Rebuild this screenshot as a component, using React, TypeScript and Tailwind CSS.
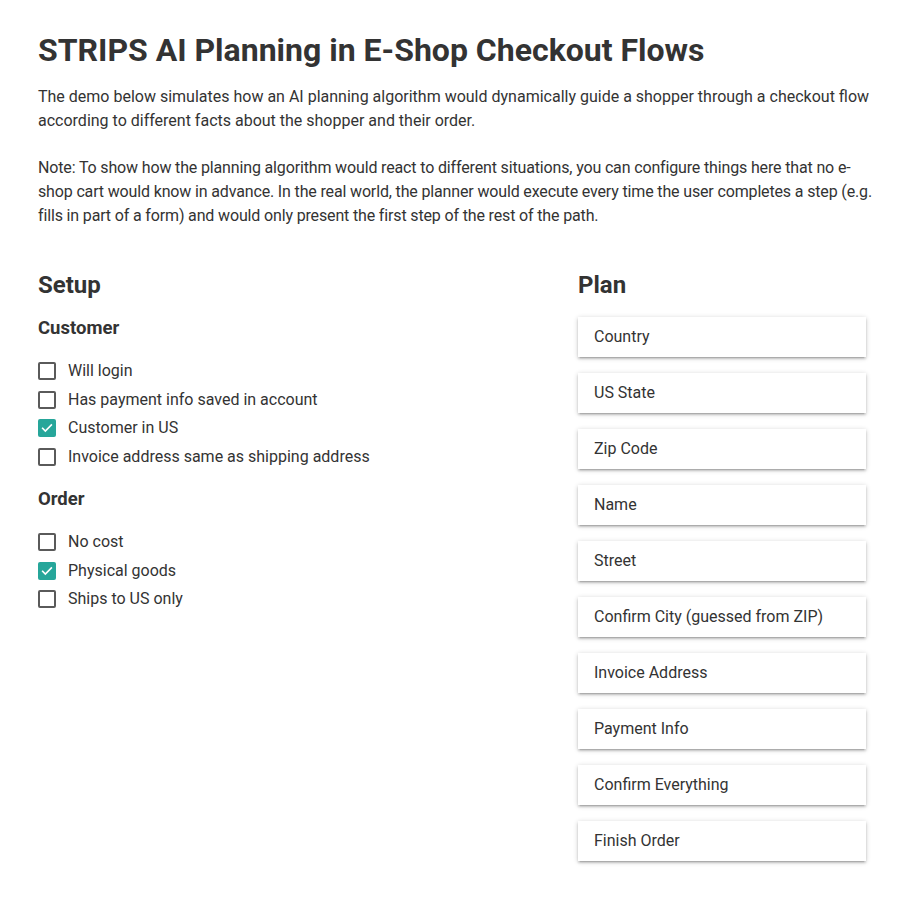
const customer = [
  { label: "Will login", checked: false },
  { label: "Has payment info saved in account", checked: false },
  { label: "Customer in US", checked: true },
  { label: "Invoice address same as shipping address", checked: false },
];

const order = [
  { label: "No cost", checked: false },
  { label: "Physical goods", checked: true },
  { label: "Ships to US only", checked: false },
];

const plan = [
  "Country",
  "US State",
  "Zip Code",
  "Name",
  "Street",
  "Confirm City (guessed from ZIP)",
  "Invoice Address",
  "Payment Info",
  "Confirm Everything",
  "Finish Order",
];

const CheckRow = ({ label, checked }: { label: string; checked: boolean }) => {
  return (
    <label className="flex items-center h-[28.5px] gap-3 cursor-pointer">
      {checked ? (
        <span className="w-[18px] h-[18px] rounded-[2px] bg-[#26a69a] flex items-center justify-center">
          <svg className="w-[16px] h-[16px]" viewBox="0 0 24 24" fill="none" stroke="white" strokeWidth="2.4" strokeLinecap="square">
            <path d="M5.5 12.5l4 4L18.5 7.5" />
          </svg>
        </span>
      ) : (
        <span className="w-[18px] h-[18px] rounded-[2px] border-2 border-[#5a5a5a] bg-white" />
      )}
      <span className="text-[16px] leading-6">{label}</span>
    </label>
  );
};

const App = () => {
  return (
    <div className="min-h-screen bg-white text-[#333] font-['Roboto',sans-serif] px-[38px] pt-[30px] pb-10">
      {/* Header */}
      <h1 className="text-[32px] leading-[40px] font-bold">STRIPS AI Planning in E-Shop Checkout Flows</h1>
      <p className="mt-[15px] text-[16px] leading-6">
        The demo below simulates how an AI planning algorithm would dynamically guide a shopper through a checkout flow according to different facts about the shopper and their order.
      </p>
      <p className="mt-[23px] text-[16px] leading-6 tracking-[-0.15px]">
        Note: To show how the planning algorithm would react to different situations, you can configure things here that no e-shop cart would know in advance. In the real world, the planner would execute every time the user completes a step (e.g. fills in part of a form) and would only present the first step of the rest of the path.
      </p>

      <div className="mt-[41px] flex">
        {/* Setup */}
        <div className="w-[540px] shrink-0">
          <h2 className="text-[24px] leading-8 font-bold">Setup</h2>
          <h3 className="mt-[15px] text-[18.5px] leading-6 font-bold">Customer</h3>
          <div className="mt-[17px]">
            {customer.map((c) => (
              <CheckRow key={c.label} label={c.label} checked={c.checked} />
            ))}
          </div>
          <h3 className="mt-[16px] text-[18.5px] leading-6 font-bold">Order</h3>
          <div className="mt-[17px]">
            {order.map((c) => (
              <CheckRow key={c.label} label={c.label} checked={c.checked} />
            ))}
          </div>
        </div>

        {/* Plan */}
        <div className="flex-1">
          <h2 className="text-[24px] leading-8 font-bold">Plan</h2>
          <div className="mt-4 flex flex-col gap-4">
            {plan.map((step) => (
              <div
                key={step}
                className="w-[288px] h-10 px-4 flex items-center bg-white text-[16px] shadow-[0_2px_2px_0_rgba(0,0,0,0.14),0_3px_1px_-2px_rgba(0,0,0,0.12),0_1px_5px_0_rgba(0,0,0,0.2)]"
              >
                {step}
              </div>
            ))}
          </div>
        </div>
      </div>
    </div>
  );
};

export default App;
